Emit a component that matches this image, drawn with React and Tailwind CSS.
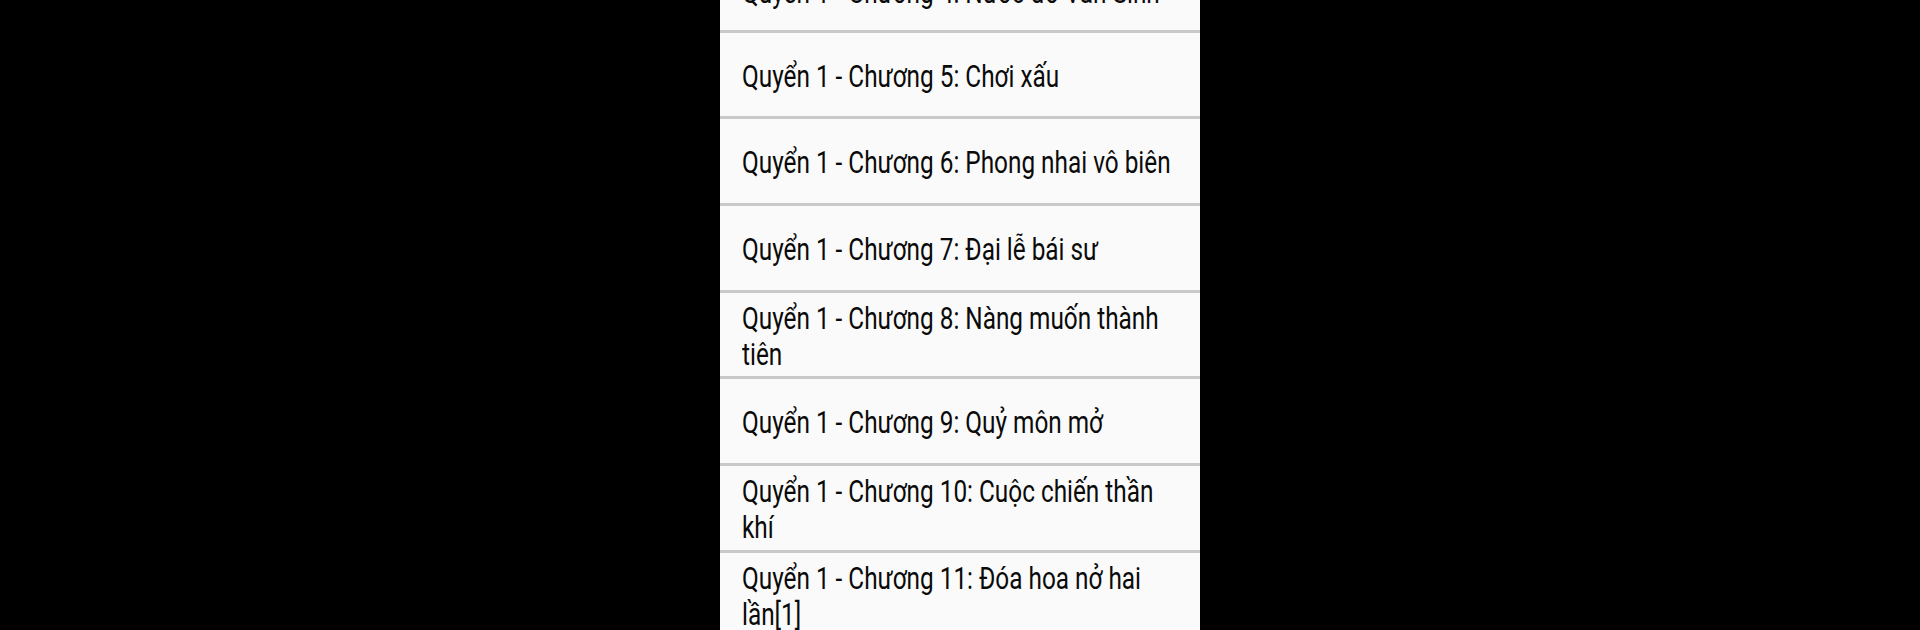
const chapters = [
  "Quyển 1 - Chương 4: Nước đổ Vân Sinh",
  "Quyển 1 - Chương 5: Chơi xấu",
  "Quyển 1 - Chương 6: Phong nhai vô biên",
  "Quyển 1 - Chương 7: Đại lễ bái sư",
  "Quyển 1 - Chương 8: Nàng muốn thành tiên",
  "Quyển 1 - Chương 9: Quỷ môn mở",
  "Quyển 1 - Chương 10: Cuộc chiến thần khí",
  "Quyển 1 - Chương 11: Đóa hoa nở hai lần[1]",
];

function ChapterRow({ title, first }) {
  return (
    <div
      className={
        "flex items-center h-[86.7px] shrink-0 border-b-[3px] border-[#c9c9c9] pl-[22px] " +
        (first ? "-mt-[54px] pt-[10px]" : "pt-[4px]")
      }
    >
      <div className="w-[555px] shrink-0 origin-left scale-x-[0.785] text-[31px] leading-[36px] text-[#0a0a0a]">
        {title}
      </div>
    </div>
  );
}

export default function App() {
  return (
    <div className="w-[1920px] h-[630px] bg-black flex justify-center overflow-hidden">
      <div
        className="w-[480px] h-[630px] bg-[#fafafa] flex flex-col overflow-hidden"
        style={{ fontFamily: "Roboto, 'Noto Sans', sans-serif" }}
      >
        {chapters.map((c, i) => (
          <ChapterRow key={c} title={c} first={i === 0} />
        ))}
      </div>
    </div>
  );
}
